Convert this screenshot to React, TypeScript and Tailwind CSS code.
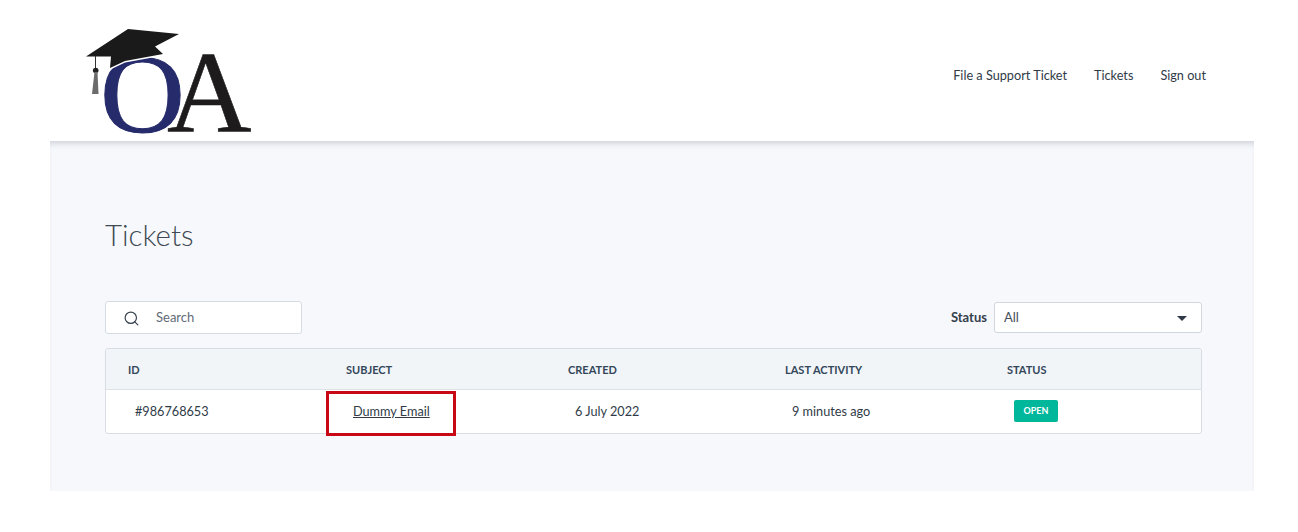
import React from "react";
import { Search } from "lucide-react";

const gridCols = "grid grid-cols-[218px_222px_217px_222px_1fr]";

const Logo = () => (
  <svg width="170" height="141" viewBox="0 0 170 141" className="block">
    <text
      x="14"
      y="132"
      fontFamily="'Liberation Serif', serif"
      fontSize="112"
      fill="#262b6b"
      stroke="#262b6b"
      strokeWidth="1"
      transform="translate(14 0) scale(1.05 1) translate(-14 0)"
    >
      O
    </text>
    <text
      x="81"
      y="132"
      fontFamily="'Liberation Serif', serif"
      fontSize="117"
      fill="#1d1b1b"
      stroke="#1d1b1b"
      strokeWidth="0.6"
    >
      A
    </text>
    <g transform="translate(0 28)">
      <path
        d="M0 28.5 L42 1 L93 6 L69 18.5 L77 26 L39 33 L24 40 L25 28.5 Z"
        fill="#fff"
        stroke="#fff"
        strokeWidth="3"
      />
      <path
        d="M0 28.5 L42 1 L93 6 L69 18.5 L77 26 L39 33 L24 40 L25 28.5 Z"
        fill="#1a1a1a"
      />
      <path d="M9.5 28 V40" stroke="#333" strokeWidth="1" />
      <circle cx="9.7" cy="42.5" r="2.8" fill="#222" />
      <path d="M8.5 44 H11.5 L12.5 66 H6 Z" fill="#6b6b6b" />
    </g>
  </svg>
);

export default function App() {
  return (
    <div className="min-h-[532px] bg-white pl-[50px] pr-[44px] font-['Lato','Inter',sans-serif]">
      <header className="flex h-[141px] items-start justify-between bg-white pl-[36px] pr-[48px]">
        <Logo />
        <nav className="flex gap-[27px] pt-[66px] text-[12.7px] leading-[18px] text-[#303b47]">
          <a>File a Support Ticket</a>
          <a>Tickets</a>
          <a>Sign out</a>
        </nav>
      </header>

      <main className="h-[350px] bg-[#f6f8fb] pl-[55px] pr-[52px] pt-[75px] shadow-[inset_0_6px_6px_-4px_rgba(120,130,140,0.35)]">
        <h1 className="text-[29.5px] font-light leading-[38px] text-[#3f4954]">Tickets</h1>

        <div className="mt-[47px] flex items-center justify-between">
          <div className="flex h-[33px] w-[197px] items-center rounded-[3px] border border-[#d6dce3] bg-white pl-[17px] pt-[1px] text-[13px] text-[#5f6b78]">
            <Search size={17} strokeWidth={1.7} className="text-[#39434e]" />
            <span className="ml-[16px]">Search</span>
          </div>
          <div className="flex items-center gap-[7px]">
            <span className="pt-[1px] text-[13px] font-bold text-[#35404c]">Status</span>
            <div className="flex h-[31px] w-[208px] items-center justify-between rounded-[3px] border border-[#d0d7df] bg-white pl-[9px] pr-[14px] pt-[1px] text-[13px] text-[#46505c]">
              <span>All</span>
              <span className="h-0 w-0 border-x-[5px] border-t-[5px] border-x-transparent border-t-[#2f3a46]" />
            </div>
          </div>
        </div>

        <div className="mt-[14px] h-[86px] rounded-[3px] border border-[#d8dde3] bg-white">
          <div className={`${gridCols} h-[41px] items-center rounded-t-[3px] border-b border-[#dde2e7] bg-[#f2f5f7] pl-[22px] pt-[2px] text-[11px] font-bold text-[#33475b]`}>
            <span>ID</span>
            <span>SUBJECT</span>
            <span>CREATED</span>
            <span>LAST ACTIVITY</span>
            <span>STATUS</span>
          </div>
          <div className={`${gridCols} h-[43px] items-center pl-[29px] text-[12.7px] text-[#303b47]`}>
            <span>#986768653</span>
            <span className="relative">
              <a className="underline">Dummy Email</a>
              <span className="absolute left-[-27px] top-[-11px] h-[45px] w-[130px] border-[3px] border-[#c80815]" />
            </span>
            <span>6 July 2022</span>
            <span>9 minutes ago</span>
            <span className="-mt-[2px]">
              <span className="inline-flex h-[22px] w-[44px] items-center justify-center rounded-[2px] bg-[#00b79c] text-[9px] font-bold text-white">
                OPEN
              </span>
            </span>
          </div>
        </div>
      </main>
    </div>
  );
}
